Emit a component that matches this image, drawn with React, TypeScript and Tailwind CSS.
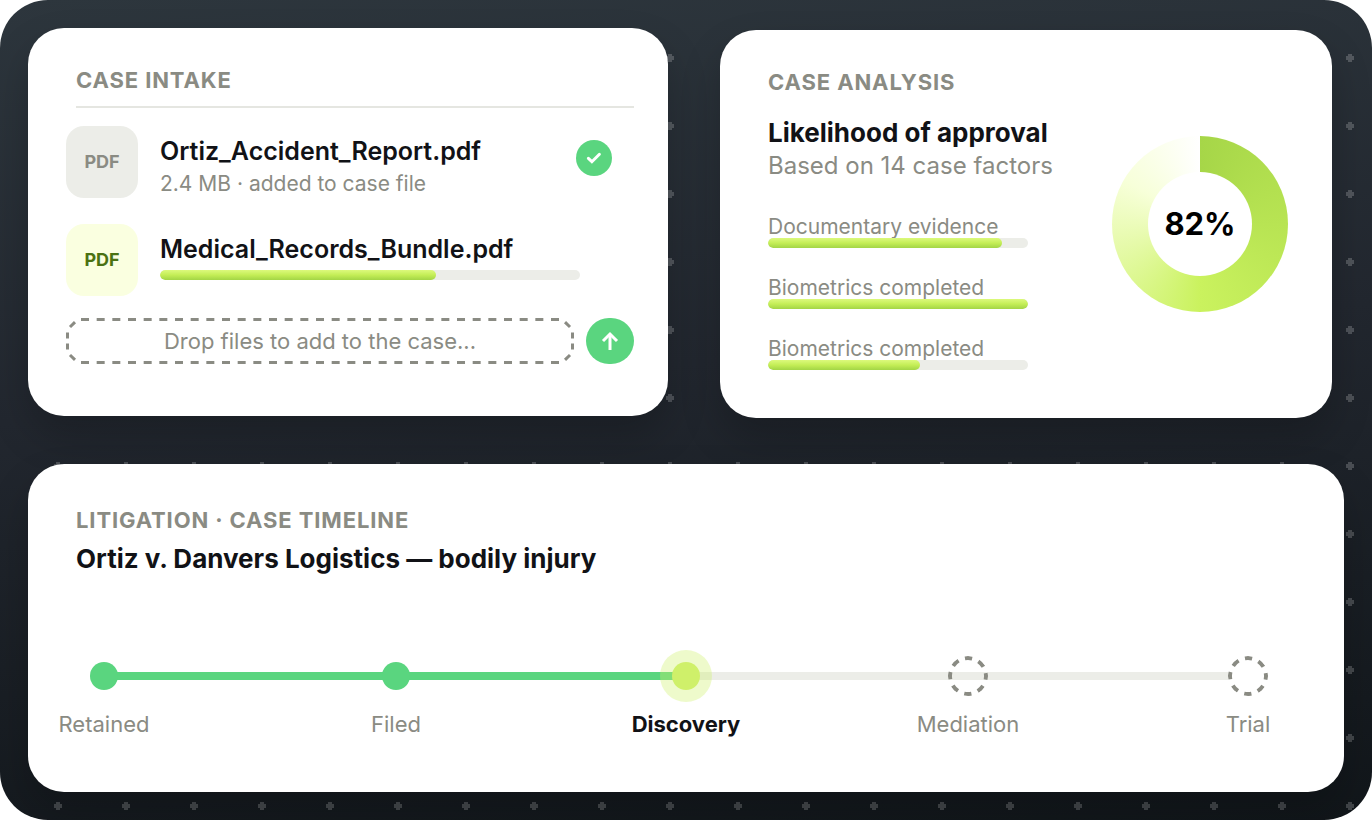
import { clsx } from 'clsx';

type StageState = 'done' | 'active' | 'open' | 'last';

const factors = [
  { label: 'Documentary evidence', value: 90 },
  { label: 'Biometrics completed', value: 100 },
  { label: 'Biometrics completed', value: 58.5 },
];

const stages: { label: string; state: StageState }[] = [
  { label: 'Retained', state: 'done' },
  { label: 'Filed', state: 'done' },
  { label: 'Discovery', state: 'active' },
  { label: 'Mediation', state: 'open' },
  { label: 'Trial', state: 'last' },
];

const ProgressBar = ({ value, label }: { value: number; label: string }) => (
  <div
    role="progressbar"
    aria-label={label}
    aria-valuenow={value}
    className="relative h-2.5 w-full rounded-full bg-[#ecede8] overflow-hidden"
  >
    <div
      className="h-full rounded-full bg-linear-to-b from-[#dcf97c] via-[#c4ee56] to-[#a3d546]"
      style={{ width: `${value}%` }}
    />
  </div>
);

const FileTile = ({ active = false }: { active?: boolean }) => (
  <div
    className={clsx(
      'size-18 shrink-0 rounded-[18px] flex items-center justify-center text-lg font-bold',
      active ? 'bg-[#faffe0] text-[#4a7212]' : 'bg-[#ecede8] text-[#8a8b83]'
    )}
  >
    PDF
  </div>
);

const StageNode = ({ state }: { state: StageState }) => {
  if (state === 'done') {
    return <span className="size-7 rounded-full bg-[#5ad57f]" />;
  }
  if (state === 'active') {
    return (
      <span className="size-13 rounded-full bg-[#cff06a]/35 flex items-center justify-center">
        <span className="size-7 rounded-full bg-[#cff06a]" />
      </span>
    );
  }
  return (
    <svg width="40" height="40" viewBox="0 0 40 40" className={clsx('rounded-full', state === 'last' && 'bg-white')}>
      <circle
        cx="20"
        cy="20"
        r="18"
        fill="none"
        stroke="#8a8b83"
        strokeWidth="4"
        strokeDasharray="7.4 6.737"
        strokeDashoffset="3.7"
      />
    </svg>
  );
};

const DashedOutline = () => (
  <svg
    viewBox="0 0 508 46"
    preserveAspectRatio="none"
    className="absolute inset-0 size-full"
    fill="none"
    stroke="#8a8b83"
    strokeWidth="3"
    aria-hidden="true"
  >
    <path d="M15 1.5 H493 M15 44.5 H493" strokeDasharray="8 7.667" />
    <path d="M1.5 14.5 V20.5 M1.5 25.5 V31.5 M506.5 14.5 V20.5 M506.5 25.5 V31.5" />
    <path d="M4 9 L9 4.2 M499 4.2 L504 9 M4 37 L9 41.8 M499 41.8 L504 37" />
  </svg>
);

const CaseIntake = () => (
  <section className="rounded-[36px] bg-white pt-[38px] pb-[52px] pl-[38px] pr-[34px] shadow-[0_20px_40px_rgba(0,0,0,0.2)]">
    <h2 className="ml-2.5 pb-3 border-b-2 border-[#e5e6e1] text-[22px] leading-7 font-bold tracking-[0.04em] text-[#8a8b83]">
      CASE INTAKE
    </h2>

    <div className="mt-[18px] flex items-start gap-[22px]">
      <FileTile />
      <div className="flex-1 pt-[9px]">
        <p className="text-[25px] leading-8 font-semibold text-[#111216]">Ortiz_Accident_Report.pdf</p>
        <p className="mt-1 text-[21px] leading-[26px] text-[#8a8b83]">2.4 MB · added to case file</p>
      </div>
      <span className="mt-3.5 mr-[22px] size-9 rounded-full bg-[#5ad57f] flex items-center justify-center">
        <svg width="16" height="16" viewBox="0 0 16 16" fill="none" stroke="white" strokeWidth="3">
          <path d="M2.4 8.4 L5.9 11.7 L13.4 4.3" strokeLinecap="round" />
        </svg>
      </span>
    </div>

    <div className="mt-[26px] flex items-start gap-[22px]">
      <FileTile active />
      <div className="flex-1 pt-[9px] mr-[54px]">
        <p className="mb-[5px] text-[25px] leading-8 font-semibold text-[#111216]">Medical_Records_Bundle.pdf</p>
        <ProgressBar value={65.7} label="Medical_Records_Bundle.pdf" />
      </div>
    </div>

    <div className="mt-[22px] flex items-center gap-3">
      <button className="relative h-[46px] flex-1 rounded-2xl text-[22px] leading-7 text-[#8a8b83]">
        <DashedOutline />
        Drop files to add to the case...
      </button>
      <button
        aria-label="Upload"
        className="h-[46px] w-12 rounded-full bg-[#5ad57f] flex items-center justify-center"
      >
        <svg width="18" height="20" viewBox="0 0 18 20" fill="none" stroke="white" strokeWidth="3">
          <path d="M9 19 V3" />
          <path d="M2 10 L9 3 L16 10" />
        </svg>
      </button>
    </div>
  </section>
);

const CaseAnalysis = () => (
  <section className="mt-0.5 rounded-[36px] bg-white pt-[38px] pb-12 pl-12 pr-11 shadow-[0_20px_40px_rgba(0,0,0,0.2)]">
    <h2 className="text-[22px] leading-7 font-bold tracking-[0.04em] text-[#8a8b83]">CASE ANALYSIS</h2>
    <div className="flex items-start justify-between">
      <div className="mt-[21px]">
        <h3 className="text-[26px] leading-8 font-bold text-[#111216]">Likelihood of approval</h3>
        <p className="text-2xl leading-[34px] text-[#8a8b83]">Based on 14 case factors</p>
        <ul className="mt-[33px] w-[260px] flex flex-col gap-[29px]">
          {factors.map((factor, i) => (
            <li key={i}>
              <p className="text-[21px] leading-[22px] text-[#8a8b83]">{factor.label}</p>
              <ProgressBar value={factor.value} label={factor.label} />
            </li>
          ))}
        </ul>
      </div>
      {/* Score ring */}
      <div className="mt-10 size-44 rounded-full p-9 bg-[conic-gradient(#a6d648_0deg,#caf25e_180deg,#f7ffd9_300deg,#ffffff_360deg)]">
        <div className="size-full rounded-full bg-white flex items-center justify-center text-[31px] leading-10 font-bold text-black">
          82%
        </div>
      </div>
    </div>
  </section>
);

const CaseTimeline = () => (
  <section className="relative mt-[46px] rounded-[36px] bg-white pt-[42px] pb-[54px] pl-4 pr-9 shadow-[0_20px_40px_rgba(0,0,0,0.2)]">
    <h2 className="ml-8 text-[22px] leading-7 font-bold tracking-[0.04em] text-[#8a8b83]">
      LITIGATION · CASE TIMELINE
    </h2>
    <h3 className="ml-8 mt-[9px] text-[26px] leading-8 font-bold text-[#111216]">
      Ortiz v. Danvers Logistics — bodily injury
    </h3>
    <ol className="mt-[75px] grid grid-cols-[292fr_290fr_282fr_280fr_120px]">
      {stages.map((stage) => (
        <li key={stage.label} className="relative">
          {/* Connector to the next stage */}
          {stage.state !== 'last' && (
            <span
              className={clsx(
                'absolute top-[22px] left-15 h-2 w-full',
                stage.state === 'done' ? 'bg-[#5ad57f]' : 'bg-[#ecede8]'
              )}
            />
          )}
          <div className="relative w-[120px] flex flex-col items-center">
            <div className="h-13 flex items-center">
              <StageNode state={stage.state} />
            </div>
            <p
              className={clsx(
                'mt-2 text-[22px] leading-7',
                stage.state === 'active' ? 'font-bold text-[#111216]' : 'text-[#8a8b83]'
              )}
            >
              {stage.label}
            </p>
          </div>
        </li>
      ))}
    </ol>
  </section>
);

const DotGrid = () => (
  <svg className="absolute inset-0 size-full" aria-hidden="true">
    <defs>
      <pattern id="dots" x="24" y="24" width="68" height="68" patternUnits="userSpaceOnUse">
        <path
          d="M32 30 H36 V32 H38 V36 H36 V38 H32 V36 H30 V32 H32 Z"
          fill="white"
          fillOpacity="0.2"
          shapeRendering="crispEdges"
        />
      </pattern>
    </defs>
    <rect width="100%" height="100%" fill="url(#dots)" />
  </svg>
);

const App = () => (
  <main className="relative overflow-hidden rounded-[48px] bg-linear-[175deg,#2d363d,#22272f_45%,#11161a] p-7 font-['Inter',sans-serif]">
    <DotGrid />
    <div className="relative">
      <div className="grid grid-cols-[640fr_612fr] items-start gap-[52px] pr-3">
        <CaseIntake />
        <CaseAnalysis />
      </div>
      <CaseTimeline />
    </div>
  </main>
);

export default App;
